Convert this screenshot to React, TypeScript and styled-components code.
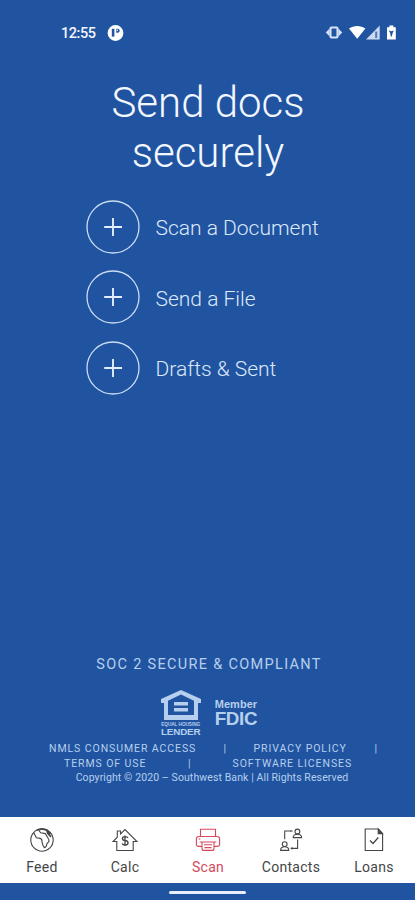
import React from "react";
import styled, { createGlobalStyle } from "styled-components";

const GlobalStyle = createGlobalStyle`
  *, *::before, *::after { box-sizing: border-box; }
  body { margin: 0; background: #2154a0; font-family: Roboto, "Liberation Sans", sans-serif; }
  svg { display: block; flex: none; }
`;

const Screen = styled.div`
  width: 415px;
  height: 900px;
  display: flex;
  flex-direction: column;
  overflow: hidden;
  background: #2154a0;
  color: #f3f7ff;
`;

const StatusBar = styled.header`
  height: 66px;
  padding: 0 18px 0 61px;
  display: flex;
  align-items: center;
  justify-content: space-between;
`;

const StatusGroup = styled.div<{ $gap: number }>`
  display: flex;
  align-items: center;
  gap: ${(p) => p.$gap}px;
`;

const Clock = styled.span`
  width: 35px;
  font-size: 14.5px;
  font-weight: 500;
  letter-spacing: -0.45px;
  white-space: nowrap;
`;

const Title = styled.h1`
  margin: 12px 0 0;
  padding-left: 1px;
  font-size: 42px;
  line-height: 50px;
  font-weight: 300;
  text-align: center;
`;

const Actions = styled.div`
  margin: 21.5px 0 0 86px;
  display: flex;
  flex-direction: column;
  gap: 16.5px;
`;

const Action = styled.button`
  display: flex;
  align-items: center;
  gap: 15.5px;
  height: 54px;
  padding: 0;
  border: 0;
  background: none;
  color: #dde8fb;
  font: 300 21px/26px Roboto, sans-serif;
  white-space: nowrap;
`;

const ActionLabel = styled.span`
  padding-top: 3px;
`;

const Footer = styled.footer`
  margin-top: auto;
  height: 161px;
  display: flex;
  flex-direction: column;
  align-items: center;
  color: #b6cfee;
`;

const Compliance = styled.div`
  margin-left: 3px;
  font-size: 14.5px;
  line-height: 18px;
  letter-spacing: 1.32px;
  white-space: nowrap;
`;

const Badges = styled.div`
  margin: 14px 0 0 2px;
  height: 54px;
  display: flex;
  gap: 13px;
`;

const Lender = styled.div`
  width: 42px;
  display: flex;
  flex-direction: column;
  align-items: center;
  font-family: "Liberation Sans", sans-serif;
  font-weight: 700;
  white-space: nowrap;
`;

const LenderSmall = styled.span`
  font-size: 4.7px;
  line-height: 5px;
  margin-top: 1px;
  letter-spacing: -0.05px;
`;

const LenderBig = styled.span`
  font-size: 9.8px;
  line-height: 10px;
  letter-spacing: -0.15px;
`;

const Fdic = styled.div`
  padding-top: 11px;
  display: flex;
  flex-direction: column;
  font-family: "Liberation Sans", sans-serif;
  font-weight: 700;
`;

const FdicMember = styled.span`
  font-size: 11px;
  line-height: 11px;
  letter-spacing: 0.05px;
`;

const FdicName = styled.span`
  font-size: 18.8px;
  line-height: 18px;
  letter-spacing: -0.3px;
`;

const Links = styled.div<{ $left: number }>`
  align-self: flex-start;
  margin-left: ${(p) => p.$left}px;
  height: 14.5px;
  display: flex;
  font-size: 10.5px;
  line-height: 14px;
  white-space: nowrap;
`;

const Link = styled.span<{ $width: number }>`
  width: ${(p) => p.$width}px;
  letter-spacing: 0.92px;
`;

const Copyright = styled.div`
  margin-left: 9px;
  font-size: 10.5px;
  line-height: 14px;
  letter-spacing: 0.1px;
  white-space: nowrap;
`;

const TabBar = styled.nav`
  height: 66px;
  background: #fff;
  display: grid;
  grid-template-columns: repeat(5, 83px);
`;

const Tab = styled.button<{ $active?: boolean }>`
  display: flex;
  flex-direction: column;
  align-items: center;
  border: 0;
  background: none;
  padding: 10px 0 0 1px;
  gap: 6px;
  color: ${(p) => (p.$active ? "#d5485b" : "#444649")};
  font: 400 14px/17px Roboto, sans-serif;
  letter-spacing: 0.3px;
  white-space: nowrap;
`;

const HomeArea = styled.div`
  height: 17px;
  display: flex;
  justify-content: center;
  padding-top: 8px;
`;

const HomePill = styled.div`
  width: 77px;
  height: 3px;
  border-radius: 2px;
  background: #e8effc;
`;

const PlusCircle = () => (
  <svg width="54" height="54" viewBox="0 0 54 54" fill="none" stroke="#cbdcf6">
    <circle cx="27" cy="27" r="26" strokeWidth="1.3" />
    <path d="M18.2 27H36M27 18v18" stroke="#e3edfc" strokeWidth="1.9" />
  </svg>
);

const tabIcon = { width: 26, height: 26, viewBox: "0 0 26 26", fill: "none", stroke: "currentColor", strokeWidth: 1.1 } as const;

const FeedIcon = () => (
  <svg {...tabIcon}>
    <circle cx="13" cy="13" r="11.2" />
    <path d="M4.6 5.6c1.6 2.2 1.4 3.4 2.9 5.2l3.6.6c1.8.4 2 1.6 1.8 3.2l1 3.6 1.4 2.4c1.6-.4 2.4-1.6 2.4-3.4l2.2-2.8c.6-2.4-1.2-3.4-2-5.2l-1.6-2.6-4.6-.8-1.9-2.4" />
    <path d="m7.6 3.3 5.4-1.4 5 1.4 3.5 3.8M18 3.6l.6 2.6 3.4 3.6" strokeWidth="1.7" />
  </svg>
);

const CalcIcon = () => (
  <svg {...tabIcon}>
    <path d="M4.8 14.5v9h16.4v-9H25L13 2.5 8.5 7V4H5.3v6.2L1 14.5z" />
    <path d="M16 10.8c-.5-.8-1.4-1.2-2.8-1.2-3.6 0-3.7 3.5-.1 3.9 4.1.5 3.7 4.5.1 4.5-1.7 0-2.7-.5-3.2-1.5M13 8.5v10.6" strokeWidth="1.3" />
  </svg>
);

const ScanIcon = () => (
  <svg {...tabIcon}>
    <path d="M5.5 9V2.2h15V9M7 19.4H3.8c-1.4 0-2.4-.9-2.4-2.2v-5.5c0-1.3 1-2.2 2.4-2.2h18.4c1.4 0 2.4.9 2.4 2.2v5.5c0 1.3-1 2.2-2.4 2.2H19M4.8 15h16.4M7 15v6.4c0 1.2.7 2 2 2h8c1.3 0 2-.8 2-2V15M9 17.8h8M9.5 20.6h7" />
    <path d="M3.7 12h1.6" />
  </svg>
);

const ContactsIcon = () => (
  <svg {...tabIcon}>
    <circle cx="19.4" cy="4.5" r="2.4" />
    <circle cx="6.7" cy="17.1" r="2.4" />
    <path d="M15.2 10.6c0-2 1.3-3.4 4.2-3.4s4.2 1.4 4.2 3.4zM2.6 23.4c0-2.2 1.3-3.6 4.1-3.6s4.1 1.4 4.1 3.6zM6.7 12.2V4h8M12.8 4.8V3.2M19.6 12.4v9h-7M14 20.3v2.2" />
  </svg>
);

const LoansIcon = () => (
  <svg {...tabIcon}>
    <path d="M4.2 2h13.2l4.2 4.5v17H4.2z" />
    <path d="m17.2 2 4.2 4.6h-4.2z" fill="currentColor" />
    <path d="m9 13.5 3 3 5.3-6" strokeWidth="1.3" />
  </svg>
);

const actions = ["Scan a Document", "Send a File", "Drafts & Sent"];

const tabs = [
  { label: "Feed", Icon: FeedIcon },
  { label: "Calc", Icon: CalcIcon },
  { label: "Scan", Icon: ScanIcon },
  { label: "Contacts", Icon: ContactsIcon },
  { label: "Loans", Icon: LoansIcon },
];

export default function App() {
  return (
    <>
      <GlobalStyle />
      <Screen>
        <StatusBar>
          <StatusGroup $gap={11}>
            <Clock>12:55</Clock>
            <svg width="17" height="17" viewBox="0 0 17 17">
              <circle cx="8.5" cy="8" r="7.9" fill="#fff" />
              <path d="M4.8 3.8h2.6v7.8H4.8z" fill="#2154a0" />
              <path d="M9.2 3.8h1.5c2.6 0 2.6 3.9 0 3.9H9.2z" fill="#2154a0" />
              <circle cx="10.3" cy="5.3" r=".8" fill="#fff" />
            </svg>
          </StatusGroup>
          <svg width="72" height="18" viewBox="0 0 72 18" fill="#fff">
            <path d="m.8 8.5 3.8-4v8zM17.2 8.5l-3.8-4v8z" fill="#d6e3f7" />
            <rect x="5.5" y="3.5" width="7" height="10" rx="1" fill="none" stroke="#d6e3f7" strokeWidth="2.1" />
            <path d="M24 4.6c4.8-3.5 11.6-3.5 16.4 0L32.2 14.8z" />
            <path d="M41 15.5 54.7 1.5v14z" fill="#c9d9f1" />
            <path d="M50.2 7.5h2v6.5h-2z" fill="#5278b5" />
            <path d="M62 3.3h2.4V1.5h4v1.8h2.4v12.2H62z" />
            <path d="m63.8 6.5 2.5.7 2.6-.7-1.3 2.5-.8 3.4h-.9l-.8-3.4z" fill="#2154a0" />
          </svg>
        </StatusBar>

        <Title>Send docs<br />securely</Title>

        <Actions>
          {actions.map((label) => (
            <Action key={label}>
              <PlusCircle />
              <ActionLabel>{label}</ActionLabel>
            </Action>
          ))}
        </Actions>

        <Footer>
          <Compliance>SOC 2 SECURE &amp; COMPLIANT</Compliance>
          <Badges>
            <Lender>
              <svg width="42" height="33" viewBox="0 -1 42 33">
                <path d="M21 1 1 10v4h3v17h34V14h3v-4zM8 11.8 21 5.4l13 6.4V26H8z" fill="currentColor" fillRule="evenodd" />
                <path d="M14 13h14v3.4H14zm0 6h14v3.4H14z" fill="currentColor" />
              </svg>
              <LenderSmall>EQUAL HOUSING</LenderSmall>
              <LenderBig>LENDER</LenderBig>
            </Lender>
            <Fdic>
              <FdicMember>Member</FdicMember>
              <FdicName>FDIC</FdicName>
            </Fdic>
          </Badges>
          <Links $left={49}>
            <Link $width={174.5}>NMLS CONSUMER ACCESS</Link>
            <Link $width={30}>|</Link>
            <Link $width={121}>PRIVACY POLICY</Link>
            <span>|</span>
          </Links>
          <Links $left={64}>
            <Link $width={124}>TERMS OF USE</Link>
            <Link $width={44.5}>|</Link>
            <Link $width={130}>SOFTWARE LICENSES</Link>
          </Links>
          <Copyright>Copyright © 2020 – Southwest Bank | All Rights Reserved</Copyright>
        </Footer>

        <TabBar>
          {tabs.map(({ label, Icon }) => (
            <Tab key={label} $active={label === "Scan"}>
              <Icon />
              {label}
            </Tab>
          ))}
        </TabBar>
        <HomeArea><HomePill /></HomeArea>
      </Screen>
    </>
  );
}
